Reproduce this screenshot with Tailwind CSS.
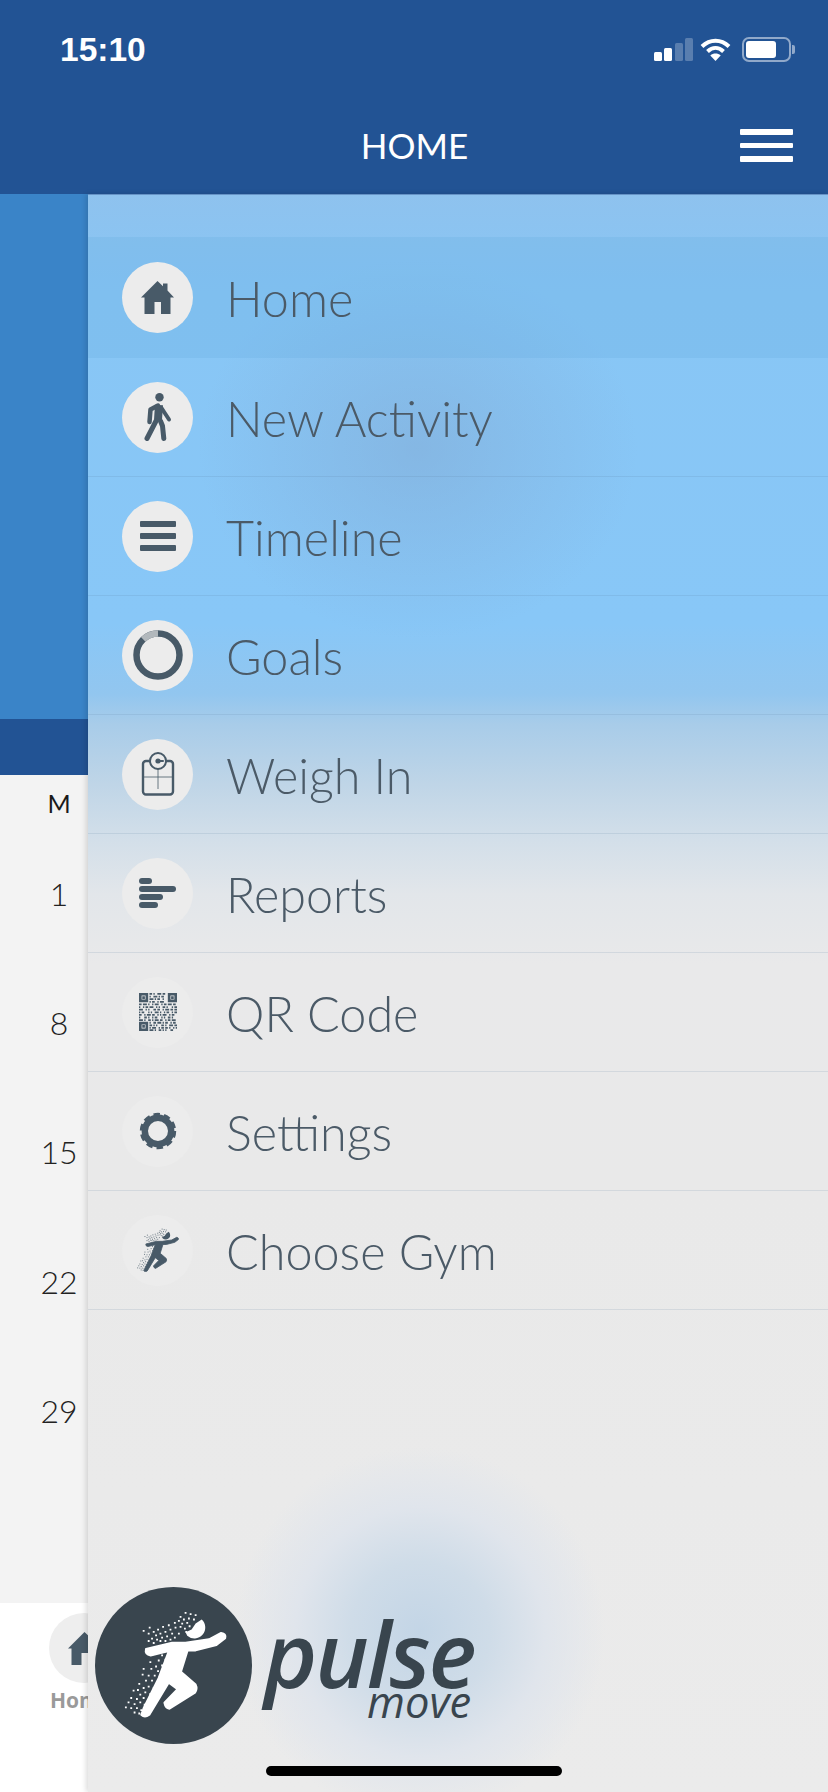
<!doctype html>
<html>
<head>
<meta charset="utf-8">
<script src="https://cdn.jsdelivr.net/npm/@tailwindcss/browser@4"></script>
</head>
<body class="m-0">
<div class="relative w-[828px] h-[1792px] overflow-hidden bg-white font-['Lato',sans-serif]">

  <!-- Top bar -->
  <header class="h-[194px] bg-[#225394] relative text-white">
    <div class="absolute left-[60px] top-[31px] font-['Liberation_Sans',sans-serif] font-bold text-[33.5px] leading-[38px]">15:10</div>
    <div class="absolute left-[654px] top-[38px] flex items-end gap-[2.4px] h-[23px]">
      <span class="w-[8px] h-[9px] rounded-[1.5px] bg-white"></span>
      <span class="w-[8px] h-[13px] rounded-[1.5px] bg-white"></span>
      <span class="w-[8px] h-[18px] rounded-[1.5px] bg-white/25"></span>
      <span class="w-[8px] h-[23px] rounded-[1.5px] bg-white/25"></span>
    </div>
    <svg class="absolute left-[700px] top-[38px]" width="31" height="23" viewBox="0 0 31 23" fill="none" stroke="#fff" stroke-width="4">
      <path d="M2 8.5C10 .8 21 .8 29 8.5"/>
      <path d="M7.5 13.5C12.5 8.8 18.5 8.8 23.5 13.5"/>
      <path d="M15.5 23l-5.2-5.5c3-2.6 7.4-2.6 10.4 0z" fill="#fff" stroke="none"/>
    </svg>
    <div class="absolute left-[742px] top-[37px] w-[49px] h-[25px] rounded-[7px] border-2 border-white/50 p-[2px]">
      <div class="w-[30px] h-full rounded-[3px] bg-white"></div>
    </div>
    <div class="absolute left-[792px] top-[45px] w-[3px] h-[9px] rounded-r-[2px] bg-white/50"></div>
    <div class="absolute left-0 w-[829px] top-[120px] text-center text-[35px] leading-[50px]">HOME</div>
    <div class="absolute left-[740px] top-[129px] w-[53px] flex flex-col gap-[8px]">
      <span class="h-[5.5px] rounded-[1px] bg-white"></span>
      <span class="h-[5.5px] rounded-[1px] bg-white"></span>
      <span class="h-[5.5px] rounded-[1px] bg-white"></span>
    </div>
  </header>

  <!-- Page beneath the drawer -->
  <main class="flex flex-col h-[1598px]">
    <div class="h-[525px] bg-[#3a84c8]"></div>
    <div class="h-[56px] bg-[#225394]"></div>
    <div class="h-[828px] bg-[#f3f3f3] relative text-[#222]">
      <div class="w-[118px] text-center text-[25px] leading-[30px] pt-[13px] text-[#1a1a1a]">M</div>
      <div class="w-[118px] flex flex-col items-center text-[32px] font-light pt-[57px] gap-[92.2px] leading-[37px]">
        <span>1</span><span>8</span><span>15</span><span>22</span><span>29</span>
      </div>
    </div>
    <div class="flex-1 bg-white relative">
      <div class="absolute left-[49px] top-[10px] w-[70px] h-[70px] rounded-full bg-[#eeeeee] flex items-center justify-center">
        <svg width="33" height="33" viewBox="0 0 33 33" fill="#485a68"><path d="M16.5 0L22 5.2V2.6h4.5v6.9L33 16.5h-3.5V33H20V21h-6.5v12H3.5V16.5H0z"/></svg>
      </div>
      <div class="absolute left-[50px] top-[83px] font-['Open_Sans',sans-serif] font-bold text-[21px] leading-[28px] text-[#9a9a9a]">Home</div>
    </div>
  </main>

  <!-- Drawer -->
  <aside class="absolute left-[88px] top-[194px] bottom-0 right-0 shadow-[-2px_0_5px_rgba(0,0,0,0.14),inset_0_1px_0_rgba(70,110,165,0.55)] text-[#4b5a67] text-[48.5px] font-light bg-[radial-gradient(circle_at_332px_1438px,#c3d5e6_0px,#cfdce8_70px,#e0e5ec_125px,rgba(233,234,235,0)_185px),radial-gradient(ellipse_220px_190px_at_330px_255px,rgba(128,160,200,0.4),rgba(128,160,200,0)),linear-gradient(180deg,#8ec2ee_0px,#88c6f5_100px,#88c7f7_430px,#92c6ef_500px,#a8cce9_530px,#bfd5e7_590px,#d1dee9_640px,#e2e6ea_700px,#e9e9ea_770px,#e9e9e9_1000px,#ebebeb_1598px)]">
    <div class="h-[43px]"></div>
    <nav class="flex flex-col">
      <a class="h-[121px] flex items-center gap-[33px] pl-[34px] bg-[#62ace0]/25">
        <span class="w-[71px] h-[71px] shrink-0 rounded-full bg-[#ececec] flex items-center justify-center">
          <svg width="33" height="33" viewBox="0 0 33 33" fill="#485a68"><path d="M16.5 0L22 5.2V2.6h4.5v6.9L33 16.5h-3.5V33H20V21h-6.5v12H3.5V16.5H0z"/></svg>
        </span>
        <span class="mt-[2px]">Home</span>
      </a>
      <a class="h-[119px] flex items-center gap-[33px] pl-[34px] border-b border-[#5a7c9a]/15">
        <span class="w-[71px] h-[71px] shrink-0 rounded-full bg-[#ececec] flex items-center justify-center">
          <svg width="28" height="48" viewBox="0 0 28 48" fill="none" stroke="#485a68" stroke-linecap="round" stroke-linejoin="round">
            <circle cx="15.5" cy="4.3" r="4.2" fill="#485a68" stroke="none"/>
            <path d="M14 12.5L6.5 16.5L5.5 29" stroke-width="4.5"/>
            <path d="M15 12L14 27" stroke-width="8" stroke-linecap="butt"/>
            <path d="M17.5 15L25 26.5" stroke-width="4"/>
            <path d="M12 28L3 45.5" stroke-width="5"/>
            <path d="M16.5 28L18.5 33L19.8 45.5" stroke-width="5"/>
          </svg>
        </span>
        <span class="mt-[2px]">New Activity</span>
      </a>
      <a class="h-[119px] flex items-center gap-[33px] pl-[34px] border-b border-[#5a7c9a]/15">
        <span class="w-[71px] h-[71px] shrink-0 rounded-full bg-[#ececec] flex flex-col items-center justify-center gap-[6px]">
          <i class="block w-[36px] h-[6px] rounded-[1px] bg-[#485a68]"></i>
          <i class="block w-[36px] h-[6px] rounded-[1px] bg-[#485a68]"></i>
          <i class="block w-[36px] h-[6px] rounded-[1px] bg-[#485a68]"></i>
        </span>
        <span class="mt-[2px]">Timeline</span>
      </a>
      <a class="h-[119px] flex items-center gap-[33px] pl-[34px] border-b border-[#5a7c9a]/15">
        <span class="w-[71px] h-[71px] shrink-0 rounded-full bg-[#ececec] flex items-center justify-center">
          <svg width="50" height="50" viewBox="0 0 50 50" fill="none" stroke-width="6.5">
            <circle cx="25" cy="25" r="21.5" stroke="#485a68"/>
            <path d="M25 3.5A21.5 21.5 0 0 0 10.2 9.4" stroke="#b2b8bc"/>
          </svg>
        </span>
        <span class="mt-[2px]">Goals</span>
      </a>
      <a class="h-[119px] flex items-center gap-[33px] pl-[34px] border-b border-[#5a7c9a]/15">
        <span class="w-[71px] h-[71px] shrink-0 rounded-full bg-[#ececec] flex items-center justify-center">
          <svg width="34" height="44" viewBox="0 0 34 44" fill="none" stroke="#485a68">
            <rect x="2" y="9" width="30" height="33.5" rx="3" stroke-width="2.4"/>
            <circle cx="17" cy="9" r="8" fill="#ececec" stroke-width="2"/>
            <circle cx="17" cy="9" r="2.6" fill="#485a68" stroke="none"/>
            <path d="M17 9h5" stroke-width="2" stroke-linecap="round"/>
            <path d="M3 25H31M17 17V37" stroke-width=".8"/>
          </svg>
        </span>
        <span class="mt-[2px]">Weigh In</span>
      </a>
      <a class="h-[119px] flex items-center gap-[33px] pl-[34px] border-b border-[#5a7c9a]/15">
        <span class="w-[71px] h-[71px] shrink-0 rounded-full bg-[#ececec] flex items-center justify-center">
          <span class="w-[37px] flex flex-col gap-[2px]">
            <i class="block w-[13px] h-[6px] rounded-full bg-[#485a68]"></i>
            <i class="block w-[37px] h-[6px] rounded-full bg-[#485a68]"></i>
            <i class="block w-[24px] h-[6px] rounded-full bg-[#485a68]"></i>
            <i class="block w-[19px] h-[6px] rounded-full bg-[#485a68]"></i>
          </span>
        </span>
        <span class="mt-[2px]">Reports</span>
      </a>
      <a class="h-[119px] flex items-center gap-[33px] pl-[34px] border-b border-[#5a7c9a]/15">
        <span class="w-[71px] h-[71px] shrink-0 rounded-full bg-[#ececec] flex items-center justify-center">
          <svg width="38" height="38" viewBox="0 0 29 29" fill="none" stroke="#485a68">
            <path d="M1 1h5v5H1zM23 1h5v5h-5zM1 23h5v5H1z" stroke-width="2"/>
            <path d="M2.5 2.5h2v2h-2zM24.5 2.5h2v2h-2zM2.5 24.5h2v2h-2z" fill="#485a68" stroke="none"/>
            <g stroke-width="1.35">
              <path d="M8 .7H21" stroke-dasharray="2 1 1 2 3 1 2 1"/>
              <path d="M8 2.7H21" stroke-dasharray="1 2 3 1 1 1 2 2"/>
              <path d="M8 4.7H21" stroke-dasharray="3 1 1 1 2 2 1 2"/>
              <path d="M8 6.7H21" stroke-dasharray="1 1 2 2 1 1 3 2"/>
              <path d="M0 8.7H29" stroke-dasharray="2 1 3 1 1 2 1 1 3 2 1 1 2 1 3 1 2"/>
              <path d="M0 10.7H29" stroke-dasharray="1 2 1 1 2 1 3 2 1 1 1 2 2 1 1 3 1"/>
              <path d="M0 12.7H29" stroke-dasharray="3 2 1 1 1 3 2 1 2 2 1 1 3 1 2 1"/>
              <path d="M0 14.7H29" stroke-dasharray="1 1 2 3 1 1 1 2 3 1 1 2 1 1 2 2"/>
              <path d="M0 16.7H29" stroke-dasharray="2 2 1 1 3 1 2 2 1 1 1 1 3 2 1 1"/>
              <path d="M0 18.7H29" stroke-dasharray="1 3 2 1 1 2 1 1 2 3 1 1 1 2 2 1"/>
              <path d="M0 20.7H29" stroke-dasharray="3 1 1 2 2 1 1 1 3 1 2 2 1 1 2 1"/>
              <path d="M8 22.7H29" stroke-dasharray="1 2 2 1 3 1 1 1 2 2 1 1 2"/>
              <path d="M8 24.7H29" stroke-dasharray="2 1 1 1 1 3 2 1 1 2 3 1"/>
              <path d="M8 26.7H29" stroke-dasharray="1 1 3 2 1 1 2 1 2 1 1 2 1"/>
              <path d="M8 28.3H29" stroke-dasharray="3 1 1 2 2 1 1 1 1 3 2"/>
            </g>
          </svg>
        </span>
        <span class="mt-[2px]">QR Code</span>
      </a>
      <a class="h-[119px] flex items-center gap-[33px] pl-[34px] border-b border-[#5a7c9a]/15">
        <span class="w-[71px] h-[71px] shrink-0 rounded-full bg-[#ececec] flex items-center justify-center">
          <svg width="38" height="38" viewBox="0 0 38 38" fill="none" stroke="#485a68">
            <circle cx="19" cy="19" r="13.2" stroke-width="6.4"/>
            <circle cx="19" cy="19" r="16.5" stroke-width="3.4" stroke-dasharray="6.4 4"/>
          </svg>
        </span>
        <span class="mt-[2px]">Settings</span>
      </a>
      <a class="h-[119px] flex items-center gap-[33px] pl-[34px] border-b border-[#5a7c9a]/15">
        <span class="w-[71px] h-[71px] shrink-0 rounded-full bg-[#ececec] flex items-center justify-center text-[#485a68]">
          <svg width="44" height="44" viewBox="20 30 320 320"><use href="#runner"/></svg>
        </span>
        <span class="mt-[2px]">Choose Gym</span>
      </a>
    </nav>
  </aside>

  <!-- Logo over the drawer -->
  <div class="absolute left-[95px] top-[1587px] flex items-start">
    <svg width="157" height="157" viewBox="0 0 156 156" class="shrink-0 text-white">
      <defs>
        <g id="runner">
          <path fill="currentColor" stroke="currentColor" stroke-width="6" stroke-linejoin="round" d="M92 146L170 127L210 127L280 117L316 98Q332 100 328 114L302 134L240 150L216 150L196 214L240 252Q246 264 238 276L162 324Q150 322 147 306L186 266L160 246L102 342Q88 352 78 342L86 320L130 232L160 152L106 165Q88 162 92 146Z"/>
          <path fill="currentColor" d="M258 58A30 30 0 0 1 215 106L210 96L228 88L240 70Z"/>
          <path fill="none" stroke="currentColor" stroke-width="5.5" stroke-linecap="square" d="M85 92h0M103 82h0M100 100h0M115 95h0M128 88h0M143 80h0M160 75h0M178 68h0M122 105h0M135 100h0M150 95h0M165 88h0M180 82h0M110 115h0M125 118h0M140 112h0M155 108h0M170 100h0M100 122h0M115 128h0M135 122h0M150 122h0M165 118h0M178 112h0M190 100h0M195 50h0M210 38h0M225 42h0M240 45h0M205 58h0M220 55h0M235 58h0M190 62h0M200 70h0M215 68h0M195 80h0M208 85h0M222 78h0M212 95h0M228 92h0M140 165h0M150 178h0M130 180h0M105 185h0M140 195h0M122 198h0M145 210h0M128 212h0M108 205h0M85 205h0M118 225h0M135 228h0M100 225h0M82 222h0M110 240h0M125 245h0M92 240h0M72 250h0M100 258h0M115 262h0M85 262h0M68 268h0M90 275h0M105 280h0M75 282h0M55 270h0M85 292h0M98 298h0M65 295h0M48 292h0M75 305h0M88 312h0M58 310h0M40 305h0M65 322h0M78 328h0M48 322h0M32 320h0M58 335h0M72 338h0"/>
        </g>
      </defs>
      <circle cx="78" cy="78" r="78" fill="#39454e"/>
      <g transform="translate(20,13) scale(0.3333)"><use href="#runner"/></g>
    </svg>
    <div class="relative w-[230px] h-[157px] ml-[12px] text-[#39454e] font-['Open_Sans',sans-serif] italic">
      <div class="absolute left-0 top-[30px] text-[91px] leading-[72px] font-semibold tracking-[-2.2px]">pulse</div>
      <div class="absolute left-[103px] top-[102px] text-[43.5px] leading-[26px]">move</div>
    </div>
  </div>

  <!-- Home indicator -->
  <div class="absolute left-[266px] top-[1766px] w-[296px] h-[10px] rounded-full bg-black"></div>
</div>
</body>
</html>
